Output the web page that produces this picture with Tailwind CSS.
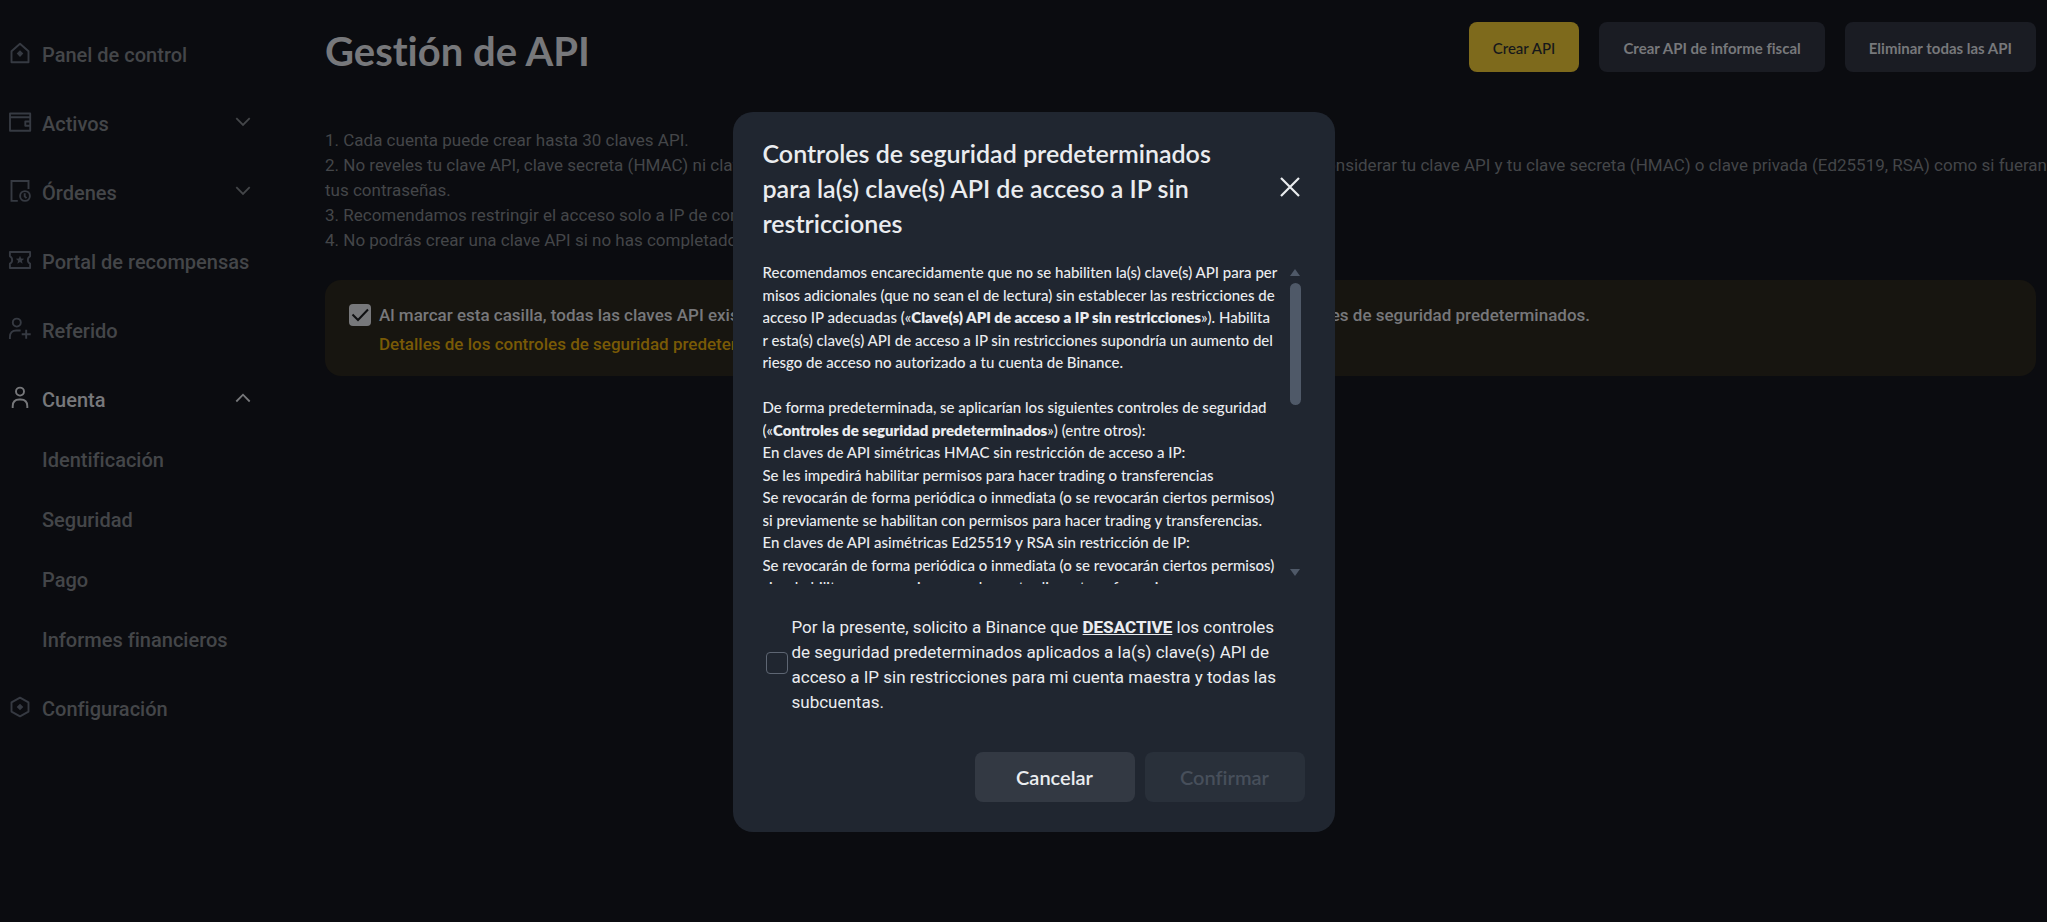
<!DOCTYPE html>
<html lang="es">
<head>
<meta charset="utf-8">
<meta name="viewport" content="width=device-width, initial-scale=1">
<title>Gestión de API</title>
<script src="https://cdn.jsdelivr.net/npm/@tailwindcss/browser@4"></script>
</head>
<body class="min-h-screen overflow-x-hidden bg-[#0b0c10] font-['Roboto','Liberation_Sans',sans-serif] text-[#444649] [font-variant-ligatures:none]">

<div class="flex">
  <nav class="w-[325px] shrink-0 pt-[25px] pl-2 pr-[74px] text-xl font-medium" aria-label="Cuenta">
    <ul class="flex flex-col gap-[9px]">
      <li><a href="#" class="flex h-[60px] items-center gap-2.5">
        <svg class="mb-1 size-6 shrink-0 text-[#363a42]" viewBox="0 0 24 24" fill="none" stroke="currentColor" stroke-width="1.9" stroke-linejoin="round"><path d="M3.500 10.300 12 2.700l8.500 7.600V21.200H3.500z"/><path d="M12 9.300 15.300 12.600 12 15.900 8.700 12.600z" fill="currentColor" stroke="none"/></svg>
        Panel de control</a></li>
      <li><a href="#" class="flex h-[60px] items-center gap-2.5">
        <svg class="mb-1 size-6 shrink-0 text-[#363a42]" viewBox="0 0 24 24" fill="none" stroke="currentColor" stroke-width="1.9" stroke-linejoin="round"><path d="M2 3.500h20.200v17.200H2zM2 7.300h20.200M22.200 11.500h-4.900v4.200h4.900"/></svg>
        <span class="flex-1">Activos</span>
        <svg class="mb-1 h-2.5 w-4" viewBox="0 0 16 10" fill="none" stroke="currentColor" stroke-width="1.800"><path d="m1.300 1.200 6.700 6.800 6.700-6.800"/></svg></a></li>
      <li><a href="#" class="flex h-[60px] items-center gap-2.5">
        <svg class="mb-1 size-6 shrink-0 text-[#363a42]" viewBox="0 0 24 24" fill="none" stroke="currentColor" stroke-width="1.9"><path d="M9.800 21.900H3.500V2h17v7.900"/><circle cx="17" cy="17" r="4.900"/><path d="M16.700 14.300v3l1.800 1.800"/></svg>
        <span class="flex-1">Órdenes</span>
        <svg class="mb-1 h-2.5 w-4" viewBox="0 0 16 10" fill="none" stroke="currentColor" stroke-width="1.800"><path d="m1.300 1.200 6.700 6.800 6.700-6.800"/></svg></a></li>
      <li><a href="#" class="flex h-[60px] items-center gap-2.5">
        <svg class="mb-1 size-6 shrink-0 text-[#363a42]" viewBox="0 0 24 24" fill="none" stroke="currentColor" stroke-width="1.9" stroke-linejoin="round"><path d="M1.900 4h20.200v4.300c-3 1.200-3 6.200 0 7.400V20H1.900v-4.300c3-1.200 3-6.200 0-7.400z"/><path d="m12 7.700 1.200 2.800 3 .2-2.300 2 .7 3-2.600-1.600-2.600 1.600.7-3-2.300-2 3-.2z" fill="currentColor" stroke="none"/></svg>
        Portal de recompensas</a></li>
      <li><a href="#" class="flex h-[60px] items-center gap-2.5">
        <svg class="mb-1 size-6 shrink-0 text-[#363a42]" viewBox="0 0 24 24" fill="none" stroke="currentColor" stroke-width="1.900"><circle cx="8.800" cy="5.600" r="4"/><path d="M1.900 22v-2.200c0-4 2.400-6.300 6.300-6.300h4.400M18.200 12.800v9M13.700 17.300h9"/></svg>
        Referido</a></li>
      <li>
        <a href="#" class="flex h-[60px] items-center gap-2.5 text-[#77787b]">
          <svg class="mb-1 size-6 shrink-0" viewBox="0 0 24 24" fill="none" stroke="currentColor" stroke-width="1.900"><circle cx="12" cy="5.600" r="4"/><path d="M4.700 22v-1.800c0-4.200 2.400-6.700 6.600-6.700h1.400c4.200 0 6.600 2.500 6.600 6.700V22"/></svg>
          <span class="flex-1">Cuenta</span>
          <svg class="mb-1 h-2.5 w-4" viewBox="0 0 16 10" fill="none" stroke="currentColor" stroke-width="1.800"><path d="m1.300 8.500 6.700-6.800 6.700 6.800"/></svg></a>
        <ul class="pl-[34px]">
          <li><a href="#" class="flex h-[60px] items-center">Identificación</a></li>
          <li><a href="#" class="flex h-[60px] items-center">Seguridad</a></li>
          <li><a href="#" class="flex h-[60px] items-center">Pago</a></li>
          <li><a href="#" class="flex h-[60px] items-center">Informes financieros</a></li>
        </ul>
      </li>
      <li><a href="#" class="flex h-[60px] items-center gap-2.5">
        <svg class="mb-1 size-6 shrink-0 text-[#363a42]" viewBox="0 0 24 24" fill="none" stroke="currentColor" stroke-width="1.900" stroke-linejoin="round"><path d="m12 2.700 8.500 4.700v9.200L12 21.300l-8.500-4.700V7.400z"/><path d="m12 8.700 3.300 3.300-3.300 3.300-3.300-3.300z" fill="currentColor" stroke="none"/></svg>
        Configuración</a></li>
    </ul>
  </nav>

  <main class="min-w-0 flex-1">
    <header class="flex items-start justify-between pt-[22px] pr-[11px] font-['Lato','Roboto',sans-serif]">
      <h1 class="pt-[3px] text-[40px] leading-[52px] font-bold text-[#77787b]">Gestión de API</h1>
      <div class="flex gap-5 text-[15px] font-bold">
        <button type="button" class="h-[50px] rounded-lg bg-[#7e6a1c] px-6 pt-0.5 font-medium text-[#15171b]">Crear API</button>
        <button type="button" class="h-[50px] rounded-lg bg-[#1a1c23] px-6 pt-0.5 text-[#77787b]">Crear API de informe fiscal</button>
        <button type="button" class="h-[50px] rounded-lg bg-[#1a1c23] px-6 pt-0.5 text-[#77787b]">Eliminar todas las API</button>
      </div>
    </header>

    <div class="pt-[51px] text-[17px] leading-[25px] whitespace-nowrap">
      <p>1. Cada cuenta puede crear hasta 30 claves API.</p>
      <p class="flex justify-between"><span>2. No reveles tu clave API, clave secreta (HMAC) ni clave privada (Ed25519, RSA) a nadie.</span><span>Debes considerar tu clave API y tu clave secreta (HMAC) o clave privada (Ed25519, RSA) como si fueran</span></p>
      <p>tus contraseñas.</p>
      <p>3. Recomendamos restringir el acceso solo a IP de confianza.</p>
      <p>4. No podrás crear una clave API si no has completado la verificación.</p>
    </div>

    <section class="mt-[27px] mr-[11px] flex h-24 gap-2 rounded-2xl bg-[#171510] pt-6 pl-6 text-[17px] font-medium">
      <input id="defaults" type="checkbox" checked class="peer sr-only">
      <label for="defaults" class="flex size-[22px] shrink-0 items-center justify-center rounded bg-[#77787b]" aria-label="Aplicar controles predeterminados">
        <svg class="size-[22px]" viewBox="0 0 22 22" fill="none" stroke="#0f1012" stroke-width="2"><path d="m3.500 10.500 5.500 5.500L19 5.500"/></svg>
      </label>
      <div class="w-[1211px] whitespace-nowrap">
        <label for="defaults" class="flex justify-between leading-[22px] text-[#77787b]"><span>Al marcar esta casilla, todas las claves API existentes de tu cuenta</span><span>quedarán sujetas a los controles de seguridad predeterminados.</span></label>
        <a href="#" class="mt-[7px] block leading-[22px] text-[#795a06]">Detalles de los controles de seguridad predeterminados</a>
      </div>
    </section>
  </main>
</div>

<div class="fixed inset-0 flex items-start justify-center pt-28 pl-5">
  <div role="dialog" aria-modal="true" aria-labelledby="dialog-title" class="w-[602px] rounded-[20px] bg-[#202630] px-[30px] pt-6 pb-[30px] text-[#eaecef]">
    <div class="flex items-start justify-between">
      <h2 id="dialog-title" class="font-['Lato','Roboto',sans-serif] text-[25px] leading-[35px] font-semibold">Controles de seguridad predeterminados<br>para la(s) clave(s) API de acceso a IP sin<br>restricciones</h2>
      <button type="button" aria-label="Cerrar" class="mt-[41px] mr-[5px] size-5">
        <svg class="size-5" viewBox="0 0 20 20" fill="none" stroke="currentColor" stroke-width="2.200"><path d="m1 1 18 18M19 1 1 19"/></svg>
      </button>
    </div>

    <div class="mt-5 flex h-[323px]">
      <div class="flex-1 overflow-y-auto font-['Lato','Roboto',sans-serif] text-[15px] leading-normal font-medium whitespace-nowrap [scrollbar-width:none]">
        <p>Recomendamos encarecidamente que no se habiliten la(s) clave(s) API para per<br>misos adicionales (que no sean el de lectura) sin establecer las restricciones de<br>acceso IP adecuadas («<b class="font-extrabold">Clave(s) API de acceso a IP sin restricciones</b>»). Habilita<br>r esta(s) clave(s) API de acceso a IP sin restricciones supondría un aumento del<br>riesgo de acceso no autorizado a tu cuenta de Binance.</p>
        <br>
        <p>De forma predeterminada, se aplicarían los siguientes controles de seguridad<br>(«<b class="font-extrabold">Controles de seguridad predeterminados</b>») (entre otros):</p>
        <p>En claves de API simétricas HMAC sin restricción de acceso a IP:</p>
        <p>Se les impedirá habilitar permisos para hacer trading o transferencias</p>
        <p>Se revocarán de forma periódica o inmediata (o se revocarán ciertos permisos)<br>si previamente se habilitan con permisos para hacer trading y transferencias.</p>
        <p>En claves de API asimétricas Ed25519 y RSA sin restricción de IP:</p>
        <p>Se revocarán de forma periódica o inmediata (o se revocarán ciertos permisos)<br>si se habilitan con permisos para hacer trading y transferencias.</p>
      </div>
      <div class="mr-1 flex w-[11px] flex-col items-center pt-2 pb-2" aria-hidden="true">
        <svg class="h-[7px] w-2.5 shrink-0" viewBox="0 0 10 7" fill="#4f5968"><path d="M5 0 10 7H0z"/></svg>
        <div class="mt-[7px] h-[122px] w-full rounded-full bg-[#4f5968]"></div>
        <svg class="mt-auto h-[7px] w-2.5 shrink-0" viewBox="0 0 10 7" fill="#4f5968"><path d="M0 0h10L5 7z"/></svg>
      </div>
    </div>

    <div class="mt-[31px] flex items-center gap-1 pl-[3px]">
      <input id="disable" type="checkbox" class="mb-1 size-[22px] shrink-0 appearance-none rounded border border-[#5e6673]">
      <label for="disable" class="text-[17px] leading-[25px] whitespace-nowrap">Por la presente, solicito a Binance que <b class="font-extrabold underline">DESACTIVE</b> los controles<br>de seguridad predeterminados aplicados a la(s) clave(s) API de<br>acceso a IP sin restricciones para mi cuenta maestra y todas las<br>subcuentas.</label>
    </div>

    <div class="mt-[37px] flex justify-end gap-2.5 font-['Lato','Roboto',sans-serif] text-xl font-semibold">
      <button type="button" class="h-[50px] w-40 rounded-lg bg-[#333943]">Cancelar</button>
      <button type="button" disabled class="h-[50px] w-40 rounded-lg bg-[#29303a] text-[#474f5b]">Confirmar</button>
    </div>
  </div>
</div>
</body>
</html>
